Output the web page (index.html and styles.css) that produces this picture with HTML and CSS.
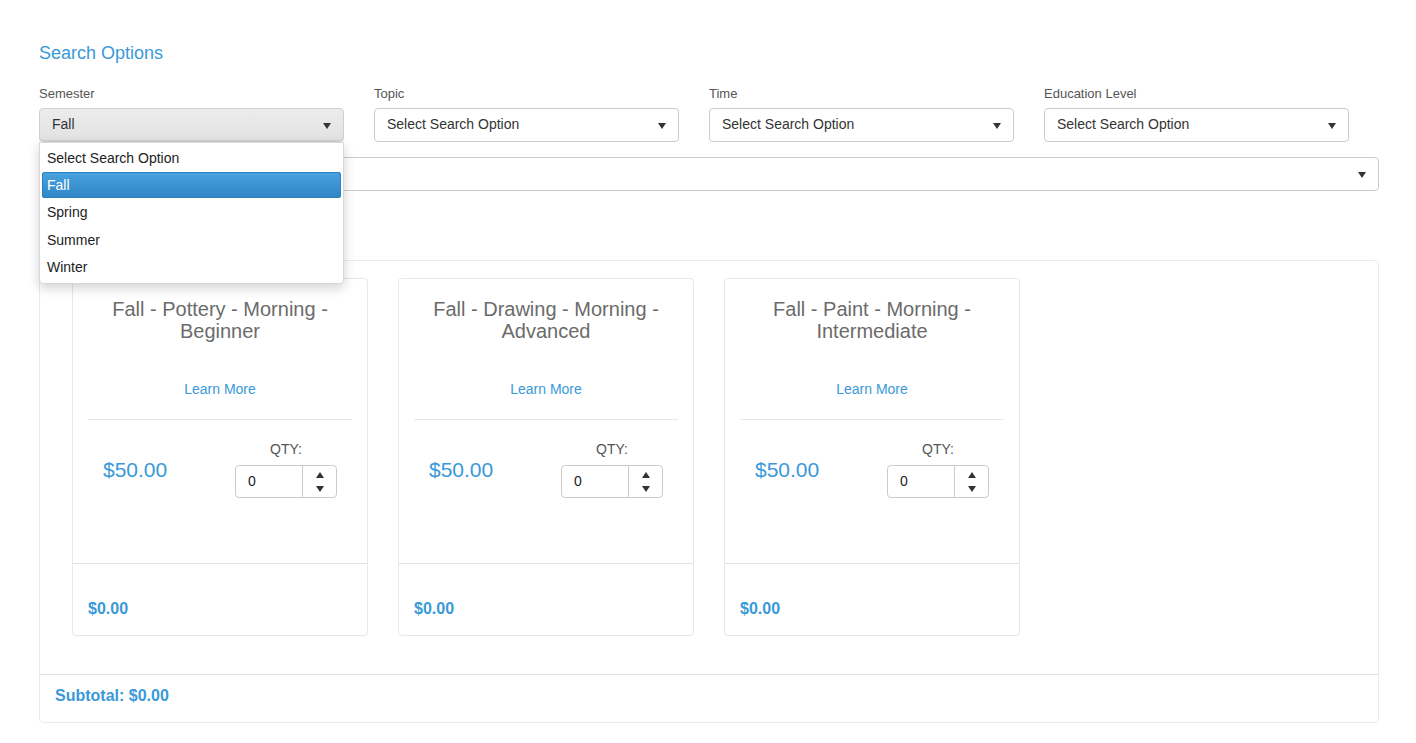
FILE: index.html
```html
<!DOCTYPE html>
<html>
<head>
<meta charset="utf-8">
<link rel="stylesheet" href="styles.css">
</head>
<body>
<div class="page">
  <h2 class="heading">Search Options</h2>
  <div class="filters">
    <div class="field">
      <label class="label">Semester</label>
      <div class="select select-open">Fall<span class="caret"></span></div>
      <div class="menu">
        <div class="opt">Select Search Option</div>
        <div class="opt opt-active">Fall</div>
        <div class="opt">Spring</div>
        <div class="opt opt-tall">Summer</div>
        <div class="opt">Winter</div>
      </div>
    </div>
    <div class="field">
      <label class="label">Topic</label>
      <div class="select">Select Search Option<span class="caret"></span></div>
    </div>
    <div class="field">
      <label class="label">Time</label>
      <div class="select">Select Search Option<span class="caret"></span></div>
    </div>
    <div class="field">
      <label class="label">Education Level</label>
      <div class="select">Select Search Option<span class="caret"></span></div>
    </div>
  </div>
  <div class="select select-wide"><span class="caret"></span></div>

  <div class="panel">
    <div class="panel-body">
      <div class="card">
        <div class="card-body">
          <h3 class="card-title">Fall - Pottery - Morning - Beginner</h3>
          <a class="learn">Learn More</a>
          <div class="rule"></div>
          <div class="buy">
            <div class="price">$50.00</div>
            <div class="qty">
              <div class="qty-label">QTY:</div>
              <div class="spin"><span class="spin-val">0</span><span class="spin-btns"><span class="up"></span><span class="down"></span></span></div>
            </div>
          </div>
        </div>
        <div class="card-foot">$0.00</div>
      </div>
      <div class="card">
        <div class="card-body">
          <h3 class="card-title">Fall - Drawing - Morning - Advanced</h3>
          <a class="learn">Learn More</a>
          <div class="rule"></div>
          <div class="buy">
            <div class="price">$50.00</div>
            <div class="qty">
              <div class="qty-label">QTY:</div>
              <div class="spin"><span class="spin-val">0</span><span class="spin-btns"><span class="up"></span><span class="down"></span></span></div>
            </div>
          </div>
        </div>
        <div class="card-foot">$0.00</div>
      </div>
      <div class="card">
        <div class="card-body">
          <h3 class="card-title">Fall - Paint - Morning - Intermediate</h3>
          <a class="learn">Learn More</a>
          <div class="rule"></div>
          <div class="buy">
            <div class="price">$50.00</div>
            <div class="qty">
              <div class="qty-label">QTY:</div>
              <div class="spin"><span class="spin-val">0</span><span class="spin-btns"><span class="up"></span><span class="down"></span></span></div>
            </div>
          </div>
        </div>
        <div class="card-foot">$0.00</div>
      </div>
    </div>
    <div class="panel-foot">Subtotal: $0.00</div>
  </div>
</div>
</body>
</html>
```

FILE: styles.css
```css
* { box-sizing: border-box; }
html, body { margin: 0; padding: 0; background: #fff; }
body {
  font-family: "Liberation Sans", Arial, Helvetica, sans-serif;
  color: #333;
  font-size: 14px;
}
.page {
  width: 1340px;
  margin-left: 39px;
  padding-top: 42px;
}
.heading {
  margin: 0;
  font-size: 18px;
  font-weight: normal;
  color: #3a99d8;
  line-height: 22px;
}
.filters {
  display: grid;
  grid-template-columns: repeat(4, 305px);
  column-gap: 30px;
  margin-top: 22px;
}
.field { position: relative; }
.label {
  display: block;
  font-size: 13px;
  color: #555;
  line-height: 16px;
  margin-bottom: 6px;
}
.select {
  position: relative;
  height: 34px;
  border: 1px solid #ccc;
  border-radius: 4px;
  padding: 0 12px;
  line-height: 30px;
  font-size: 14px;
  color: #333;
  background: #fff;
}
.select-open {
  background: linear-gradient(#ececec, #e2e2e2);
  border-color: #d0d0d0;
  box-shadow: inset 0 -1px 0 rgba(0,0,0,0.08);
}
.caret {
  position: absolute;
  right: 12px;
  top: 14px;
  width: 0;
  height: 0;
  border-left: 4px solid transparent;
  border-right: 4px solid transparent;
  border-top: 6px solid #333;
}
.select-wide {
  margin-top: 15px;
  width: 1340px;
}
.menu {
  position: absolute;
  left: 0;
  top: 56px;
  width: 305px;
  height: 142px;
  background: #fff;
  border: 1px solid #d8d8d8;
  border-radius: 0 0 4px 4px;
  box-shadow: 0 4px 12px rgba(0,0,0,0.18);
  padding: 2px 2px;
  z-index: 5;
}
.opt {
  height: 27px;
  line-height: 27px;
  padding: 0 5px;
  font-size: 14px;
  color: #222;
}
.opt-tall {
  height: 28px;
  line-height: 29px;
}
.opt-active {
  height: 26px;
  line-height: 26px;
  margin: 0 0 1px;
  color: #fff;
  border-radius: 3px;
  background: linear-gradient(#4aa2de, #2f86c6);
  box-shadow: inset 0 0 0 1px #2c7fbd;
}
.panel {
  margin-top: 69px;
  border: 1px solid #eaeaea;
  border-radius: 4px;
  width: 1340px;
}
.panel-body {
  display: flex;
  gap: 30px;
  padding: 17px 32px 38px;
}
.card {
  width: 296px;
  height: 358px;
  border: 1px solid #e8e8e8;
  border-radius: 4px;
  display: flex;
  flex-direction: column;
}
.card-body {
  flex: 1;
  padding: 19px 15px 0;
  text-align: center;
}
.card-title {
  margin: 0 auto;
  width: 240px;
  font-size: 20px;
  font-weight: normal;
  line-height: 22px;
  color: #6b6b6b;
}
.learn {
  display: block;
  margin-top: 38px;
  font-size: 14px;
  line-height: 18px;
  color: #3a99d8;
}
.rule {
  margin-top: 21px;
  border-top: 1px solid #e8e8e8;
}
.buy {
  display: flex;
  align-items: flex-start;
  margin-top: 21px;
}
.price {
  width: 147px;
  padding-top: 18px;
  padding-left: 15px;
  text-align: left;
  font-size: 21px;
  line-height: 22px;
  color: #3a99d8;
}
.qty {
  width: 102px;
  text-align: center;
}
.qty-label {
  font-size: 14px;
  line-height: 17px;
  color: #555;
  margin-bottom: 7px;
}
.spin {
  display: flex;
  height: 33px;
  border: 1px solid #ccc;
  border-radius: 4px;
  text-align: left;
}
.spin-val {
  flex: 1;
  padding-left: 12px;
  line-height: 31px;
  font-size: 14px;
  color: #222;
}
.spin-btns {
  width: 34px;
  border-left: 1px solid #ccc;
  display: flex;
  flex-direction: column;
  align-items: center;
  justify-content: center;
  gap: 8px;
}
.up, .down {
  width: 0;
  height: 0;
  border-left: 4px solid transparent;
  border-right: 4px solid transparent;
}
.up { border-bottom: 6px solid #333; }
.down { border-top: 6px solid #333; }
.card-foot {
  height: 72px;
  border-top: 1px solid #e2e2e2;
  padding: 36px 15px 0;
  font-size: 16px;
  font-weight: bold;
  color: #3a99d8;
  line-height: 18px;
}
.panel-foot {
  border-top: 1px solid #e2e2e2;
  height: 48px;
  padding: 12px 15px 0;
  font-size: 16px;
  font-weight: bold;
  color: #3a99d8;
  line-height: 18px;
}
```
